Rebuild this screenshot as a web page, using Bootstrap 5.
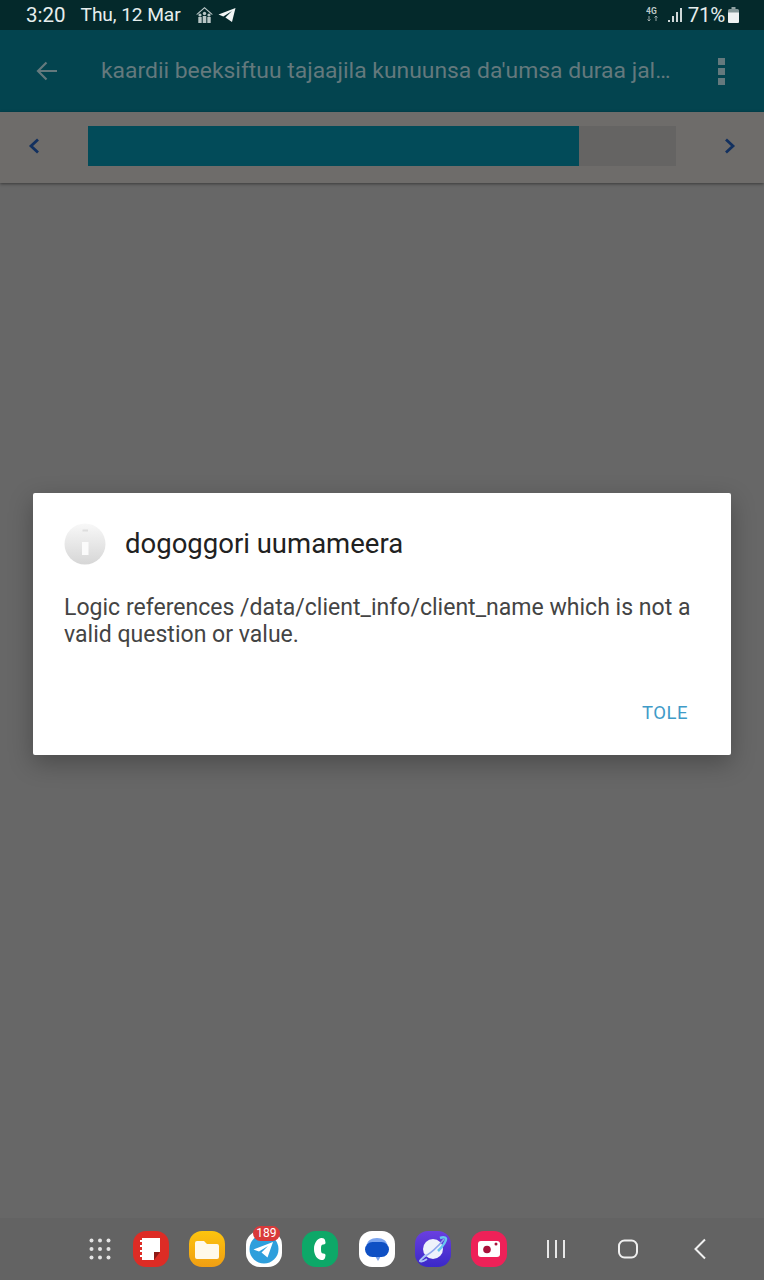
<!DOCTYPE html>
<html lang="en">
<head>
    <meta charset="UTF-8">
    <meta name="viewport" content="width=device-width, initial-scale=1.0">
    <title>Logic error dialog</title>
    <link href="https://cdn.jsdelivr.net/npm/bootstrap@5.3.0/dist/css/bootstrap.min.css" rel="stylesheet">
    <style>
        html, body { height: 100%; }
        body {
            width: 764px;
            height: 1280px;
            overflow: hidden;
            background-color: #676767;
            font-family: Roboto, "Liberation Sans", sans-serif;
        }
        .screen { height: 1280px; }
        .status-strip {
            height: 30px;
            padding: 0 25px 0 26px;
            background-color: #04292b;
            color: #e6eeee;
        }
        .status-time { font-size: 20.5px; margin-right: 15px; }
        .status-date { font-size: 19.2px; margin-right: 14px; letter-spacing: -0.1px; }
        .status-batt { font-size: 20.5px; letter-spacing: -0.3px; margin: 0 3px 0 6px; }
        .tool-strip {
            height: 82px;
            padding: 0 39px 0 36px;
            background-color: #03444f;
            color: #64797d;
        }
        .tool-title {
            margin-left: 43px;
            font-size: 22.9px;
            white-space: nowrap;
        }
        .nav-strip {
            height: 71px;
            padding: 14px 28px 17px 28px;
            background-color: #6e6c6a;
            box-shadow: 0 1px 3px rgba(0, 0, 0, .45);
        }
        .prog-track {
            width: 588px;
            height: 40px;
            margin: 0 auto;
            display: flex;
            background-color: #656463;
        }
        .prog-fill { background-color: #024b59; }
        .dialog-wrap { padding: 310px 33px 0; flex: 1 1 auto; }
        .msg-box {
            height: 262px;
            padding: 30px 31px 0;
            background-color: #fff;
            border-radius: 2px;
            box-shadow: 0 8px 24px rgba(0, 0, 0, .28);
        }
        .msg-icon { width: 42px; height: 42px; margin-right: 19px; flex: none; }
        .msg-title { font-size: 27.5px; color: #212121; line-height: 42px; }
        .msg-body {
            margin: 29px 0 0;
            font-size: 23.05px;
            line-height: 27px;
            color: #444;
        }
        .msg-btn {
            margin: 53px 12px 0 0;
            font-size: 18.5px;
            line-height: 24px;
            letter-spacing: .5px;
            color: #3f9bc8;
            text-align: right;
        }
        .dock {
            height: 62px;
            padding: 0 55px 0 89px;
            background-color: #636363;
        }
        .dock-app { width: 36px; height: 36px; flex: none; margin-right: 20.4px; }
        .dock-sys { flex: none; }
        .tg-wrap { position: relative; }
        .tg-count {
            position: absolute;
            top: -5px;
            left: 7px;
            width: 27px;
            height: 15px;
            border-radius: 8px;
            background-color: #d93a3a;
            color: #fff;
            font-size: 12px;
            line-height: 15px;
            text-align: center;
        }
    </style>
</head>
<body>
    <div class="screen d-flex flex-column">
        <!-- status bar -->
        <div class="status-strip d-flex align-items-center">
            <span class="status-time">3:20</span>
            <span class="status-date">Thu, 12 Mar</span>
            <svg width="19" height="18" viewBox="0 0 19 18" fill="#b9c6c6">
                <path d="M9.5 1 1 8.5h1.6L9.5 2.6l6.9 5.9H18z"/>
                <circle cx="5" cy="9" r="1.6"/><circle cx="9.5" cy="7.5" r="1.7"/><circle cx="14" cy="9" r="1.6"/>
                <path d="M3.3 11h3.4v6H3.3zM7.7 10h3.6v7H7.7zM12.3 11h3.4v6h-3.4z"/>
            </svg>
            <svg class="ms-1" width="18" height="16" viewBox="0 0 18 16" fill="#f2f6f6">
                <path d="M17.5 1 .5 7.6l4.8 1.9L14 4 7.4 10.6l6.6 4.4z"/>
            </svg>
            <span class="ms-auto d-flex align-items-center">
                <svg width="14" height="18" viewBox="0 0 14 18" fill="#bcc8c8">
                    <text x="0" y="8" font-size="8.5" font-weight="700" font-family="Roboto, sans-serif">4G</text>
                    <path d="M3 10v5M1.5 13.5 3 15l1.5-1.5M10 15v-5M8.5 11.500 10 10l1.500 1.500" fill="none" stroke="#9aa8a8" stroke-width="1"/>
                </svg>
                <svg class="ms-2" width="14" height="16" viewBox="0 0 14 16" fill="#cfd8d8">
                    <path d="M0 13h2v2H0zM4 9h2v6H4zM8 5h2v10H8zM12 1h2v14h-2z"/>
                </svg>
                <span class="status-batt">71%</span>
                <svg width="11" height="16" viewBox="0 0 11 16" fill="#eef2f2">
                    <path d="M3.500 0h4v2h-4z" opacity=".6"/>
                    <path d="M1.500 2h8A1.500 1.500 0 0 1 11 3.500v11A1.500 1.500 0 0 1 9.500 16h-8A1.500 1.500 0 0 1 0 14.500v-11A1.500 1.500 0 0 1 1.500 2z" opacity=".55"/>
                    <path d="M0 5.500h11v9A1.500 1.500 0 0 1 9.500 16h-8A1.500 1.500 0 0 1 0 14.500z"/>
                </svg>
            </span>
        </div>

        <!-- toolbar -->
        <div class="tool-strip d-flex align-items-center">
            <svg width="22" height="20" viewBox="0 0 22 20" fill="none" stroke="#64797d" stroke-width="2.200">
                <path d="M21 10H2M10.500 1.500 2 10l8.500 8.500"/>
            </svg>
            <div class="tool-title">kaardii beeksiftuu tajaajila kunuunsa da'umsa duraa jal…</div>
            <svg class="ms-auto" width="7" height="27" viewBox="0 0 7 27" fill="#64797d">
                <rect width="7" height="7" y="0"/><rect width="7" height="7" y="10"/><rect width="7" height="7" y="20"/>
            </svg>
        </div>

        <!-- progress row -->
        <div class="nav-strip d-flex align-items-center">
            <svg width="12" height="16" viewBox="0 0 12 16" fill="none" stroke="#12305f" stroke-width="2.800">
                <path d="M10 1.500 3 8l7 6.500"/>
            </svg>
            <div class="prog-track">
                <div class="prog-fill" style="width: 83.5%"></div>
            </div>
            <svg width="12" height="16" viewBox="0 0 12 16" fill="none" stroke="#12305f" stroke-width="2.800">
                <path d="M2 1.500 9 8l-7 6.500"/>
            </svg>
        </div>

        <!-- dialog -->
        <div class="dialog-wrap">
            <div class="msg-box">
                <div class="d-flex align-items-center">
                    <svg class="msg-icon" viewBox="0 0 42 42">
                        <defs>
                            <linearGradient id="infoGrad" x1="0" y1="0" x2="0" y2="1">
                                <stop offset="0" stop-color="#f8f8f8"/>
                                <stop offset="1" stop-color="#d6d6d6"/>
                            </linearGradient>
                        </defs>
                        <circle cx="21" cy="21" r="20.500" fill="url(#infoGrad)"/>
                        <rect x="18.500" y="6.500" width="5.500" height="2" fill="#dedede"/>
                        <rect x="18" y="19" width="6.500" height="13" fill="#fbfbfb"/>
                    </svg>
                    <div class="msg-title">dogoggori uumameera</div>
                </div>
                <p class="msg-body">Logic references /data/client_info/client_name which is not a valid question or value.</p>
                <div class="msg-btn">TOLE</div>
            </div>
        </div>

        <!-- taskbar -->
        <div class="dock d-flex align-items-center">
            <svg class="dock-sys" width="22" height="22" viewBox="0 0 22 22" fill="#e4e4e4" style="margin-right: 22px">
                <circle cx="2.500" cy="2.500" r="2"/><circle cx="11" cy="2.500" r="2"/><circle cx="19.500" cy="2.500" r="2"/>
                <circle cx="2.500" cy="11" r="2"/><circle cx="11" cy="11" r="2"/><circle cx="19.500" cy="11" r="2"/>
                <circle cx="2.500" cy="19.500" r="2"/><circle cx="11" cy="19.500" r="2"/><circle cx="19.500" cy="19.500" r="2"/>
            </svg>
            <svg class="dock-app" viewBox="0 0 36 36">
                <rect width="36" height="36" rx="13" fill="#dd2c25"/>
                <path d="M9 7h18v14h-6v8H9v-3h-2v-2h2v-3h-2v-2h2v-3h-2v-2h2v-3h-2v-2h2z" fill="#fff"/>
                <path d="M21 21h6l-6 8z" fill="#8e1a16"/>
            </svg>
            <svg class="dock-app" viewBox="0 0 36 36">
                <defs>
                    <linearGradient id="foldGrad" x1="0" y1="0" x2="0" y2="1">
                        <stop offset="0" stop-color="#fdc40e"/>
                        <stop offset="1" stop-color="#f09e13"/>
                    </linearGradient>
                </defs>
                <rect width="36" height="36" rx="13" fill="url(#foldGrad)"/>
                <path d="M6 12a2 2 0 0 1 2-2h7l3 3h10a2 2 0 0 1 2 2v11a2 2 0 0 1-2 2H8a2 2 0 0 1-2-2z" fill="#fff9ea"/>
            </svg>
            <div class="dock-app tg-wrap">
                <svg width="36" height="36" viewBox="0 0 36 36" class="d-block">
                    <rect width="36" height="36" rx="14" fill="#fff"/>
                    <circle cx="18" cy="18" r="14.500" fill="#2e9fdc"/>
                    <path d="M27 11 7.500 18.500l5.500 2 9-5.500-6.500 6.500 6 5z" fill="#fff"/>
                </svg>
                <span class="tg-count">189</span>
            </div>
            <svg class="dock-app" viewBox="0 0 36 36">
                <rect width="36" height="36" rx="14" fill="#0da868"/>
                <path d="M19 7c-4 1-7 5-7 11s3 10 7 11c2 .4 3.500-.5 4-2l.5-2.500c.2-1.200-.8-2-2-2-1.500 0-2.500-.5-2.500-4.500s1-4.500 2.500-4.500c1.200 0 2.200-.8 2-2L23 9c-.5-1.500-2-2.400-4-2z" fill="#fff"/>
            </svg>
            <svg class="dock-app" viewBox="0 0 36 36">
                <rect width="36" height="36" rx="13" fill="#fff"/>
                <path d="M8 14c0-4 4-7 10-7s10 3 10 7z" fill="#7ba4ef"/>
                <path d="M16 25h6l-3 5z" fill="#7ba4ef"/>
                <rect x="6" y="11" width="24" height="15" rx="7.500" fill="#0f50c4"/>
            </svg>
            <svg class="dock-app" viewBox="0 0 36 36">
                <defs>
                    <linearGradient id="netGrad" x1="0" y1="0" x2="0" y2="1">
                        <stop offset="0" stop-color="#6a3fe0"/>
                        <stop offset="1" stop-color="#3a28c8"/>
                    </linearGradient>
                </defs>
                <rect width="36" height="36" rx="13" fill="url(#netGrad)"/>
                <circle cx="18" cy="18" r="10" fill="#eef2fb"/>
                <path d="M8 26C14 24 24 15 29 8" fill="none" stroke="#8fa6ee" stroke-width="1.500"/>
                <path d="M25 7c3-1 6-1 6 1 0 3-4 8-8 12" fill="none" stroke="#68c7ef" stroke-width="2.500"/>
                <path d="M11 24c-3 3-6 5-6 6 1 1 4 0 7-2" fill="none" stroke="#a9c4f5" stroke-width="2"/>
            </svg>
            <svg class="dock-app" viewBox="0 0 36 36" style="margin-right: 0">
                <rect width="36" height="36" rx="13" fill="#ee2158"/>
                <rect x="7" y="10" width="22" height="16" rx="3" fill="#fff"/>
                <circle cx="16" cy="18.500" r="3.800" fill="#a8123a"/>
                <circle cx="25" cy="13" r="1.500" fill="#a8123a"/>
            </svg>
            <svg class="dock-sys" width="20" height="20" viewBox="0 0 20 20" fill="none" stroke="#e8e8e8" stroke-width="2" style="margin-left: 39px">
                <path d="M2 1v18M10 1v18M18 1v18"/>
            </svg>
            <svg class="dock-sys" width="20" height="20" viewBox="0 0 20 20" fill="none" stroke="#f0f0f0" stroke-width="2" style="margin-left: 52px">
                <rect x="1" y="1.500" width="18" height="17" rx="5.500"/>
            </svg>
            <svg class="dock-sys" width="14" height="22" viewBox="0 0 14 22" fill="none" stroke="#f0f0f0" stroke-width="2" style="margin-left: 55px">
                <path d="M12 1.500 2.500 11l9.500 9.500"/>
            </svg>
        </div>
    </div>
    <script src="https://cdn.jsdelivr.net/npm/bootstrap@5.3.0/dist/js/bootstrap.bundle.min.js"></script>
</body>
</html>
